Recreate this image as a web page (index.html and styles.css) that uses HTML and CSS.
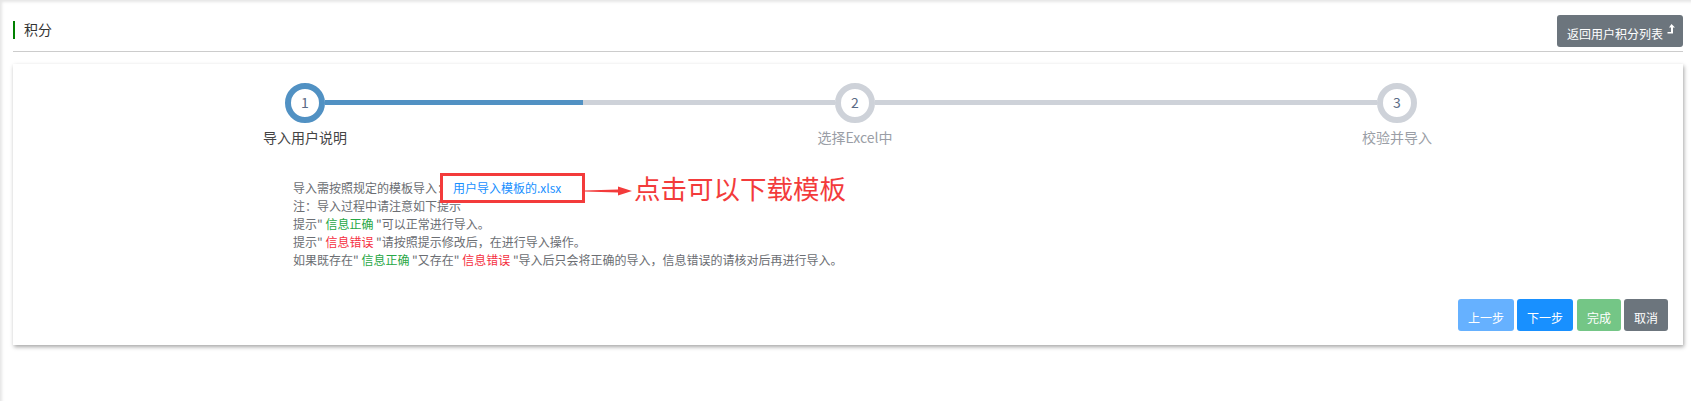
FILE: index.html
```html
<!DOCTYPE html>
<html>
<head>
    <meta charset="UTF-8">
    <title>积分</title>
    <link rel="stylesheet" href="styles.css">
</head>
<body>
    <div class="page">
        <div class="page-head">
            <div class="page-title">积分</div>
            <button class="btn btn-gray btn-back">返回用户积分列表
                <svg class="back-icon" width="8" height="10" viewBox="0 0 8 10"><path d="M4.5 0 L8 3.6 H6 V9.5 H0.5 V8 H4 V3.6 H2 Z" fill="#fff"/></svg>
            </button>
        </div>

        <div class="card">
            <div class="steps">
                <div class="step active">
                    <div class="step-circle">1</div>
                    <div class="step-label">导入用户说明</div>
                </div>
                <div class="step-line first"><div class="step-progress"></div></div>
                <div class="step">
                    <div class="step-circle">2</div>
                    <div class="step-label">选择Excel中</div>
                </div>
                <div class="step-line second"></div>
                <div class="step">
                    <div class="step-circle">3</div>
                    <div class="step-label">校验并导入</div>
                </div>
            </div>

            <div class="guide">
                <p>导入需按照规定的模板导入：<a class="tpl-link" href="#">用户导入模板的.xlsx</a></p>
                <p>注：导入过程中请注意如下提示</p>
                <p>提示" <span class="ok">信息正确</span> "可以正常进行导入。</p>
                <p>提示" <span class="err">信息错误</span> "请按照提示修改后，在进行导入操作。</p>
                <p>如果既存在" <span class="ok">信息正确</span> "又存在" <span class="err">信息错误</span> "导入后只会将正确的导入，信息错误的请核对后再进行导入。</p>

                <div class="mark-box"></div>
                <svg class="mark-arrow" width="48" height="10" viewBox="0 0 48 10"><path d="M0 4.6 L34 3.6 L34 0.5 L48 5 L34 9.5 L34 6.4 L0 5.4 Z" fill="#f33b3b"/></svg>
                <div class="mark-text">点击可以下载模板</div>
            </div>

            <div class="actions">
                <button class="btn btn-blue disabled">上一步</button>
                <button class="btn btn-blue">下一步</button>
                <button class="btn btn-green">完成</button>
                <button class="btn btn-gray">取消</button>
            </div>
        </div>
    </div>
</body>
</html>
```

FILE: styles.css
```css
* {
    margin: 0;
    padding: 0;
    box-sizing: border-box;
    font-family: "Noto Sans CJK SC", "Liberation Sans", sans-serif;
}

body {
    background: white;
    height: 401px;
    overflow: hidden;
    box-shadow: inset 3px 3px 3px -1px rgba(0,0,0,0.1);
}

.page {
    padding: 15px 8px 0 13px;
    color: #606266;
}

.page-head {
    display: flex;
    justify-content: space-between;
    align-items: flex-start;
    height: 37px;
    border-bottom: 1px solid #ccc;
}

.page-title {
    margin-top: 6px;
    height: 18px;
    line-height: 16px;
    padding-left: 9px;
    border-left: 2px solid green;
    font-size: 14px;
    color: #333;
}

.btn {
    height: 32px;
    border: none;
    border-radius: 3px;
    color: white;
    font-size: 12px;
    line-height: 26px;
    padding-top: 5px;
    width: 56px;
}

.btn-back {
    width: 126px;
    padding-left: 10px;
    text-align: left;
    position: relative;
}

.back-icon {
    position: absolute;
    top: 9px;
    right: 8px;
}

.btn-gray {
    background: #6c757d;
}

.btn-blue {
    background: #1890ff;
}

.btn-blue.disabled {
    background: #66b1ff;
}

.btn-green {
    background: #74c686;
}

.card {
    margin-top: 12px;
    height: 281px;
    background: white;
    padding: 19px 0 0 0;
    box-shadow: 1px 2px 4px rgba(0,0,0,0.35);
    position: relative;
}

.steps {
    display: flex;
    padding: 0 266px 0 272px;
}

.step {
    width: 40px;
    display: flex;
    flex-direction: column;
    align-items: center;
    color: #9a9ea6;
}

.step-circle {
    flex: none;
    width: 40px;
    height: 40px;
    border: 6px solid #ced2d9;
    border-radius: 50%;
    text-align: center;
    line-height: 27px;
    font-size: 14px;
    color: #5a6a85;
}

.step-label {
    margin-top: 4px;
    font-size: 14px;
    line-height: 20px;
    white-space: nowrap;
}

.step.active .step-circle {
    border-color: #5191c3;
}

.step.active .step-label {
    color: #444;
}

.step-line {
    height: 5px;
    margin-top: 17px;
    background: #ced2d9;
}

.step-line.first {
    flex: 510;
}

.step-line.second {
    flex: 502;
}

.step-progress {
    width: 50.6%;
    height: 100%;
    background: #5191c3;
}

.guide {
    position: relative;
    margin: 32px 0 0 280px;
    font-size: 12px;
    line-height: 18px;
    color: #6b6e73;
}

.tpl-link {
    margin-left: 4px;
    color: #1890ff;
    text-decoration: none;
}

.ok {
    color: #28a745;
}

.err {
    color: #f5303f;
}

.mark-box {
    position: absolute;
    left: 147px;
    top: -6px;
    width: 145px;
    height: 30px;
    border: 3px solid #f33b3b;
}

.mark-arrow {
    position: absolute;
    left: 291px;
    top: 7px;
}

.mark-text {
    position: absolute;
    left: 341px;
    top: -9px;
    font-size: 26.5px;
    line-height: 36px;
    color: #f33b3b;
    white-space: nowrap;
}

.actions {
    position: absolute;
    right: 15px;
    bottom: 14px;
    display: flex;
    gap: 3px;
}

.actions .btn-green {
    width: 44px;
    margin-left: 1px;
}

.actions .btn-gray {
    width: 44px;
}
```
